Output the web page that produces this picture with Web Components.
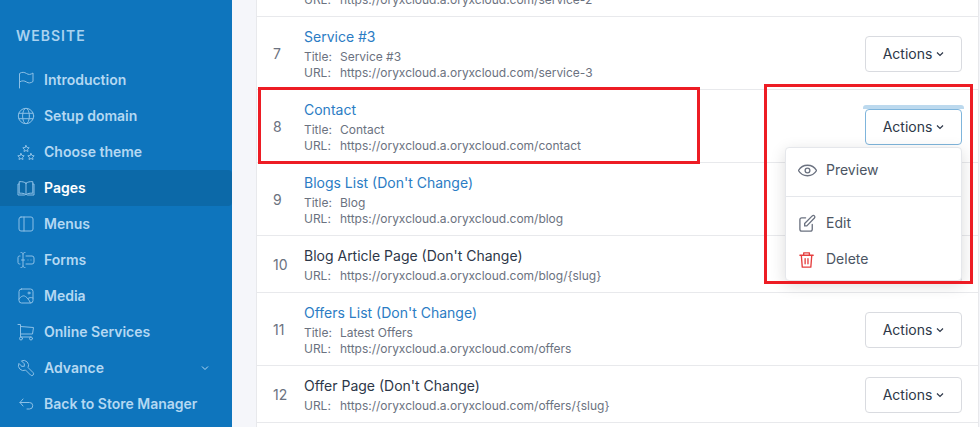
<!DOCTYPE html>
<html>
<head>
<meta charset="utf-8">
<title>Pages</title>
<style>
    html, body { margin: 0; height: 100%; overflow: hidden; }
    body { font-family: Inter, "Liberation Sans", sans-serif; }
</style>
</head>
<body>
<app-shell>
    <side-nav slot="nav"></side-nav>
    <page-row slot="rows" link title-text="Service #2" meta-title="Service #2" url="https://oryxcloud.a.oryxcloud.com/service-2" num="6"></page-row>
    <page-row slot="rows" link title-text="Service #3" meta-title="Service #3" url="https://oryxcloud.a.oryxcloud.com/service-3" num="7"></page-row>
    <page-row slot="rows" link open title-text="Contact" meta-title="Contact" url="https://oryxcloud.a.oryxcloud.com/contact" num="8"></page-row>
    <page-row slot="rows" link title-text="Blogs List (Don't Change)" meta-title="Blog" url="https://oryxcloud.a.oryxcloud.com/blog" num="9"></page-row>
    <page-row slot="rows" title-text="Blog Article Page (Don't Change)" url="https://oryxcloud.a.oryxcloud.com/blog/{slug}" num="10"></page-row>
    <page-row slot="rows" link title-text="Offers List (Don't Change)" meta-title="Latest Offers" url="https://oryxcloud.a.oryxcloud.com/offers" num="11"></page-row>
    <page-row slot="rows" title-text="Offer Page (Don't Change)" url="https://oryxcloud.a.oryxcloud.com/offers/{slug}" num="12"></page-row>
    <red-mark slot="marks" style="left:258px;top:87px;width:436px;height:71px"></red-mark>
    <red-mark slot="marks" style="left:764px;top:84px;width:203px;height:194px"></red-mark>
</app-shell>

<script>
// outline icons for the sidebar, 20x20
const ICONS = {
    flag: '<path d="M3.500 18V3.500c2.500-1.800 5-1.300 7 0 2 1.300 4 1.300 6.500-.5v8.500c-2.500 1.800-4.500 1.800-6.500.5-2-1.300-4.500-1.800-7 0"/>',
    globe: '<circle cx="10" cy="10" r="7.700"/><ellipse cx="10" cy="10" rx="3.400" ry="7.700"/><path d="M3 7.300h14M3 12.700h14"/>',
    stars: '<path d="M10 3.500l1 2 2.200.3-1.600 1.500.4 2.200-2-1-2 1 .4-2.200-1.600-1.500 2.200-.3zM5 11.500l1 2 2.200.3-1.600 1.500.4 2.200-2-1-2 1 .4-2.200-1.600-1.500 2.200-.3zM15 11.500l1 2 2.200.3-1.600 1.500.4 2.200-2-1-2 1 .4-2.200-1.600-1.500 2.200-.3z"/>',
    book: '<path d="M10 5.200C8.500 3.900 6 3.500 3.200 3.700v11.500c2.800-.2 5.300.2 6.800 1.500 1.500-1.300 4-1.700 6.800-1.500V3.700C14 3.500 11.500 3.900 10 5.200zM10 5.200v11.500"/><path d="M3.200 6H2v11h6.500M16.800 6H18v11h-6.500"/>',
    sidebar: '<rect x="3" y="3" width="14" height="14" rx="2"/><path d="M8 3v14"/>',
    forms: '<path d="M5 2.500c1.300 0 2 .5 2 1.500v12c0 1-.7 1.500-2 1.500M9 2.500c-1.300 0-2 .5-2 1.500M9 17.500c-1.300 0-2-.5-2-1.500M5.500 10h3"/><path d="M10 6h6a2 2 0 0 1 2 2v4a2 2 0 0 1-2 2h-6M4 6h-.5A1.500 1.500 0 0 0 2 7.500v5A1.500 1.500 0 0 0 3.500 14H4"/><path d="M12 10h.01M15 10h.01"/>',
    image: '<rect x="3" y="3" width="14" height="14" rx="2.500"/><circle cx="13" cy="7" r="1"/><path d="M3 13c2-2.800 4.500-4 6.500-2.500 2 1.500 3.500 3.200 5 6.500M12 12.500c1.200-1 3-1.300 5-.5"/>',
    cart: '<circle cx="5" cy="16.500" r="1.500"/><circle cx="15" cy="16.500" r="1.500"/><path d="M2 2.500h2.500v12.500H15M4.500 4.500l13 1-1 6.500h-12"/>',
    wrench: '<path transform="scale(.8333)" vector-effect="non-scaling-stroke" d="M7 10h3v-3l-3.500-3.500a6 6 0 0 1 8 8l6 6a2 2 0 0 1-3 3l-6-6a6 6 0 0 1-8-8l3.500 3.500"/>',
    back: '<path d="M7 5L4 8.500 7 12M4 8.500h9.500a3.200 3.200 0 0 1 0 6.500H11"/>'
};

class AppShell extends HTMLElement {
    constructor() {
        super();
        this.attachShadow({mode: 'open'}).innerHTML = `
            <style>
                :host { display: flex; position: relative; width: 980px; height: 427px; overflow: hidden; background: #f5f6fa; }
                .nav { flex: 0 0 232px; }
                .content { flex: 0 0 723px; box-sizing: border-box; margin-left: 24px; background: #fff; border-left: 1px solid #e8e9ec; border-right: 1px solid #e8e9ec; height: 427px; overflow: hidden; }
                .list { margin-top: -56px; }
            </style>
            <div class="nav"><slot name="nav"></slot></div>
            <div class="content"><div class="list"><slot name="rows"></slot></div></div>
            <slot name="marks"></slot>
        `;
    }
}

class SideNav extends HTMLElement {
    constructor() {
        super();
        const items = [
            ['flag', 'Introduction'], ['globe', 'Setup domain'], ['stars', 'Choose theme'],
            ['book', 'Pages', 'on'], ['sidebar', 'Menus'], ['forms', 'Forms'], ['image', 'Media'],
            ['cart', 'Online Services'], ['wrench', 'Advance', '', true], ['back', 'Back to Store Manager']
        ];
        const html = items.map(([icon, label, cls, more]) => `
            <a class="${cls || ''}">
                <svg class="ic" width="20" height="20" viewBox="0 0 20 20">${ICONS[icon]}</svg>
                <span>${label}</span>
                ${more ? '<svg class="more" width="10" height="10" viewBox="0 0 10 10"><path d="M2 3.500L5 6.500 8 3.500"/></svg>' : ''}
            </a>`).join('');
        this.attachShadow({mode: 'open'}).innerHTML = `
            <style>
                :host { display: block; width: 232px; height: 427px; background: #0e75bd; font-family: Inter, "Liberation Sans", sans-serif; color: #b4d8f2; }
                h4 { margin: 0; padding: 28px 16px 0; height: 34px; font-size: 14px; line-height: 16px; font-weight: 600; letter-spacing: 1px; color: #a9d2f0; }
                a { display: flex; align-items: center; height: 36px; padding-left: 16px; font-size: 14px; font-weight: 600; border-radius: 0 4px 4px 0; }
                a span { padding-bottom: 2px; }
                a.on { background: #0c69a8; color: #fff; }
                .ic { flex: none; margin-right: 8px; fill: none; stroke: #8cc0e6; stroke-width: 1; stroke-linecap: round; stroke-linejoin: round; }
                .more { margin-left: auto; margin-right: 22px; fill: none; stroke: #b4d8f2; stroke-width: 1; }
            </style>
            <h4>WEBSITE</h4>
            ${html}
        `;
    }
}

class ActionMenu extends HTMLElement {
    constructor() {
        super();
        this.attachShadow({mode: 'open'}).innerHTML = `
            <style>
                :host { display: block; position: absolute; right: 16px; top: 57px; width: 177px; height: 134px; box-sizing: border-box; z-index: 5; background: #fff; border: 1px solid #e5e7eb; border-radius: 4px; box-shadow: 0 4px 16px rgba(0,0,0,.14); font-size: 14px; color: #4b5563; }
                .item { display: flex; align-items: center; height: 36px; padding-left: 12px; }
                .item span { padding-bottom: 2px; }
                svg { flex: none; margin-right: 9px; fill: none; stroke: #6b7280; stroke-width: 1.4; stroke-linecap: round; stroke-linejoin: round; }
                .first { margin-top: 4px; }
                hr { border: 0; border-top: 1px solid #e5e7eb; margin: 8px 0; }
                .del svg { stroke: #e53e3e; }
            </style>
            <div class="item first">
                <svg width="19" height="19" viewBox="0 0 20 20"><path d="M.5 10C2.700 6.300 6 4.500 10 4.500s7.300 1.800 9.500 5.500c-2.200 3.700-5.500 5.500-9.500 5.500S2.700 13.700.5 10z"/><circle cx="10" cy="10" r="2.500"/></svg>
                <span>Preview</span>
            </div>
            <hr>
            <div class="item">
                <svg width="19" height="19" viewBox="0 0 20 20"><path d="M8 4H4a2 2 0 0 0-2 2v10a2 2 0 0 0 2 2h9a2 2 0 0 0 2-2v-5"/><path d="M7 12.500V10l8-8c.8-.7 1.700-.7 2.300 0 .6.600.6 1.500 0 2.200l-8 8.300z"/></svg>
                <span>Edit</span>
            </div>
            <div class="item del">
                <svg width="19" height="19" viewBox="0 0 20 20"><path d="M2 5.500h14M6 5.500V3h6v2.500M3.500 5.500l1 12.500h9l1-12.500M7.500 9v5.500M10.500 9v5.500"/></svg>
                <span>Delete</span>
            </div>
        `;
    }
}

class PageRow extends HTMLElement {
    constructor() {
        super();
        const title = this.getAttribute('title-text');
        const metaTitle = this.getAttribute('meta-title');
        const link = this.hasAttribute('link');
        const open = this.hasAttribute('open');
        this.attachShadow({mode: 'open'}).innerHTML = `
            <style>
                :host { display: flex; align-items: center; position: relative; box-sizing: border-box; width: 721px; padding: 10px 16px 8px 16px; border-bottom: 1px solid #e8e9ec; font-family: Inter, "Liberation Sans", sans-serif; }
                .num { flex: 0 0 31px; padding-bottom: 2px; font-size: 14px; color: #6b7280; }
                .body { flex: 1; }
                .name { font-size: 14px; line-height: 20px; margin-bottom: 2px; color: #2d3748; }
                .name.link { color: #2b7cc4; }
                .meta { display: flex; font-size: 12px; line-height: 16px; color: #6b7280; letter-spacing: -.02px; }
                .meta b { flex: 0 0 36px; font-weight: 400; }
                .btn { display: flex; align-items: center; justify-content: center; box-sizing: border-box; width: 97px; height: 36px; padding-bottom: 2px; border: 1px solid #d9dbe0; border-radius: 4px; background: #fff; font-size: 14px; color: #2d3748; position: relative; }
                .btn svg { margin-left: 4px; margin-top: 2px; fill: none; stroke: #2d3748; stroke-width: 1.2; }
                .btn.open { border-color: #7fb5dc; }
                .btn.open::before { content: ''; position: absolute; left: -3px; right: -3px; top: -5px; height: 4px; background: #bcd9ee; border-radius: 3px 3px 0 0; }
            </style>
            <div class="num">${this.getAttribute('num')}</div>
            <div class="body">
                <div class="name ${link ? 'link' : ''}">${title}</div>
                ${metaTitle ? `<div class="meta"><b>Title:</b><span>${metaTitle}</span></div>` : ''}
                <div class="meta"><b>URL:</b><span>${this.getAttribute('url')}</span></div>
            </div>
            <div class="btn ${open ? 'open' : ''}">Actions<svg width="8" height="6" viewBox="0 0 8 6"><path d="M1 1.500L4 4.500 7 1.500"/></svg></div>
            ${open ? '<action-menu></action-menu>' : ''}
        `;
    }
}

class RedMark extends HTMLElement {
    constructor() {
        super();
        this.attachShadow({mode: 'open'}).innerHTML = `
            <style>
                :host { display: block; position: absolute; border: 3px solid #ed1c24; z-index: 9; pointer-events: none; }
            </style>
        `;
    }
}

window.customElements.define('action-menu', ActionMenu);
window.customElements.define('page-row', PageRow);
window.customElements.define('side-nav', SideNav);
window.customElements.define('red-mark', RedMark);
window.customElements.define('app-shell', AppShell);
</script>
</body>
</html>
